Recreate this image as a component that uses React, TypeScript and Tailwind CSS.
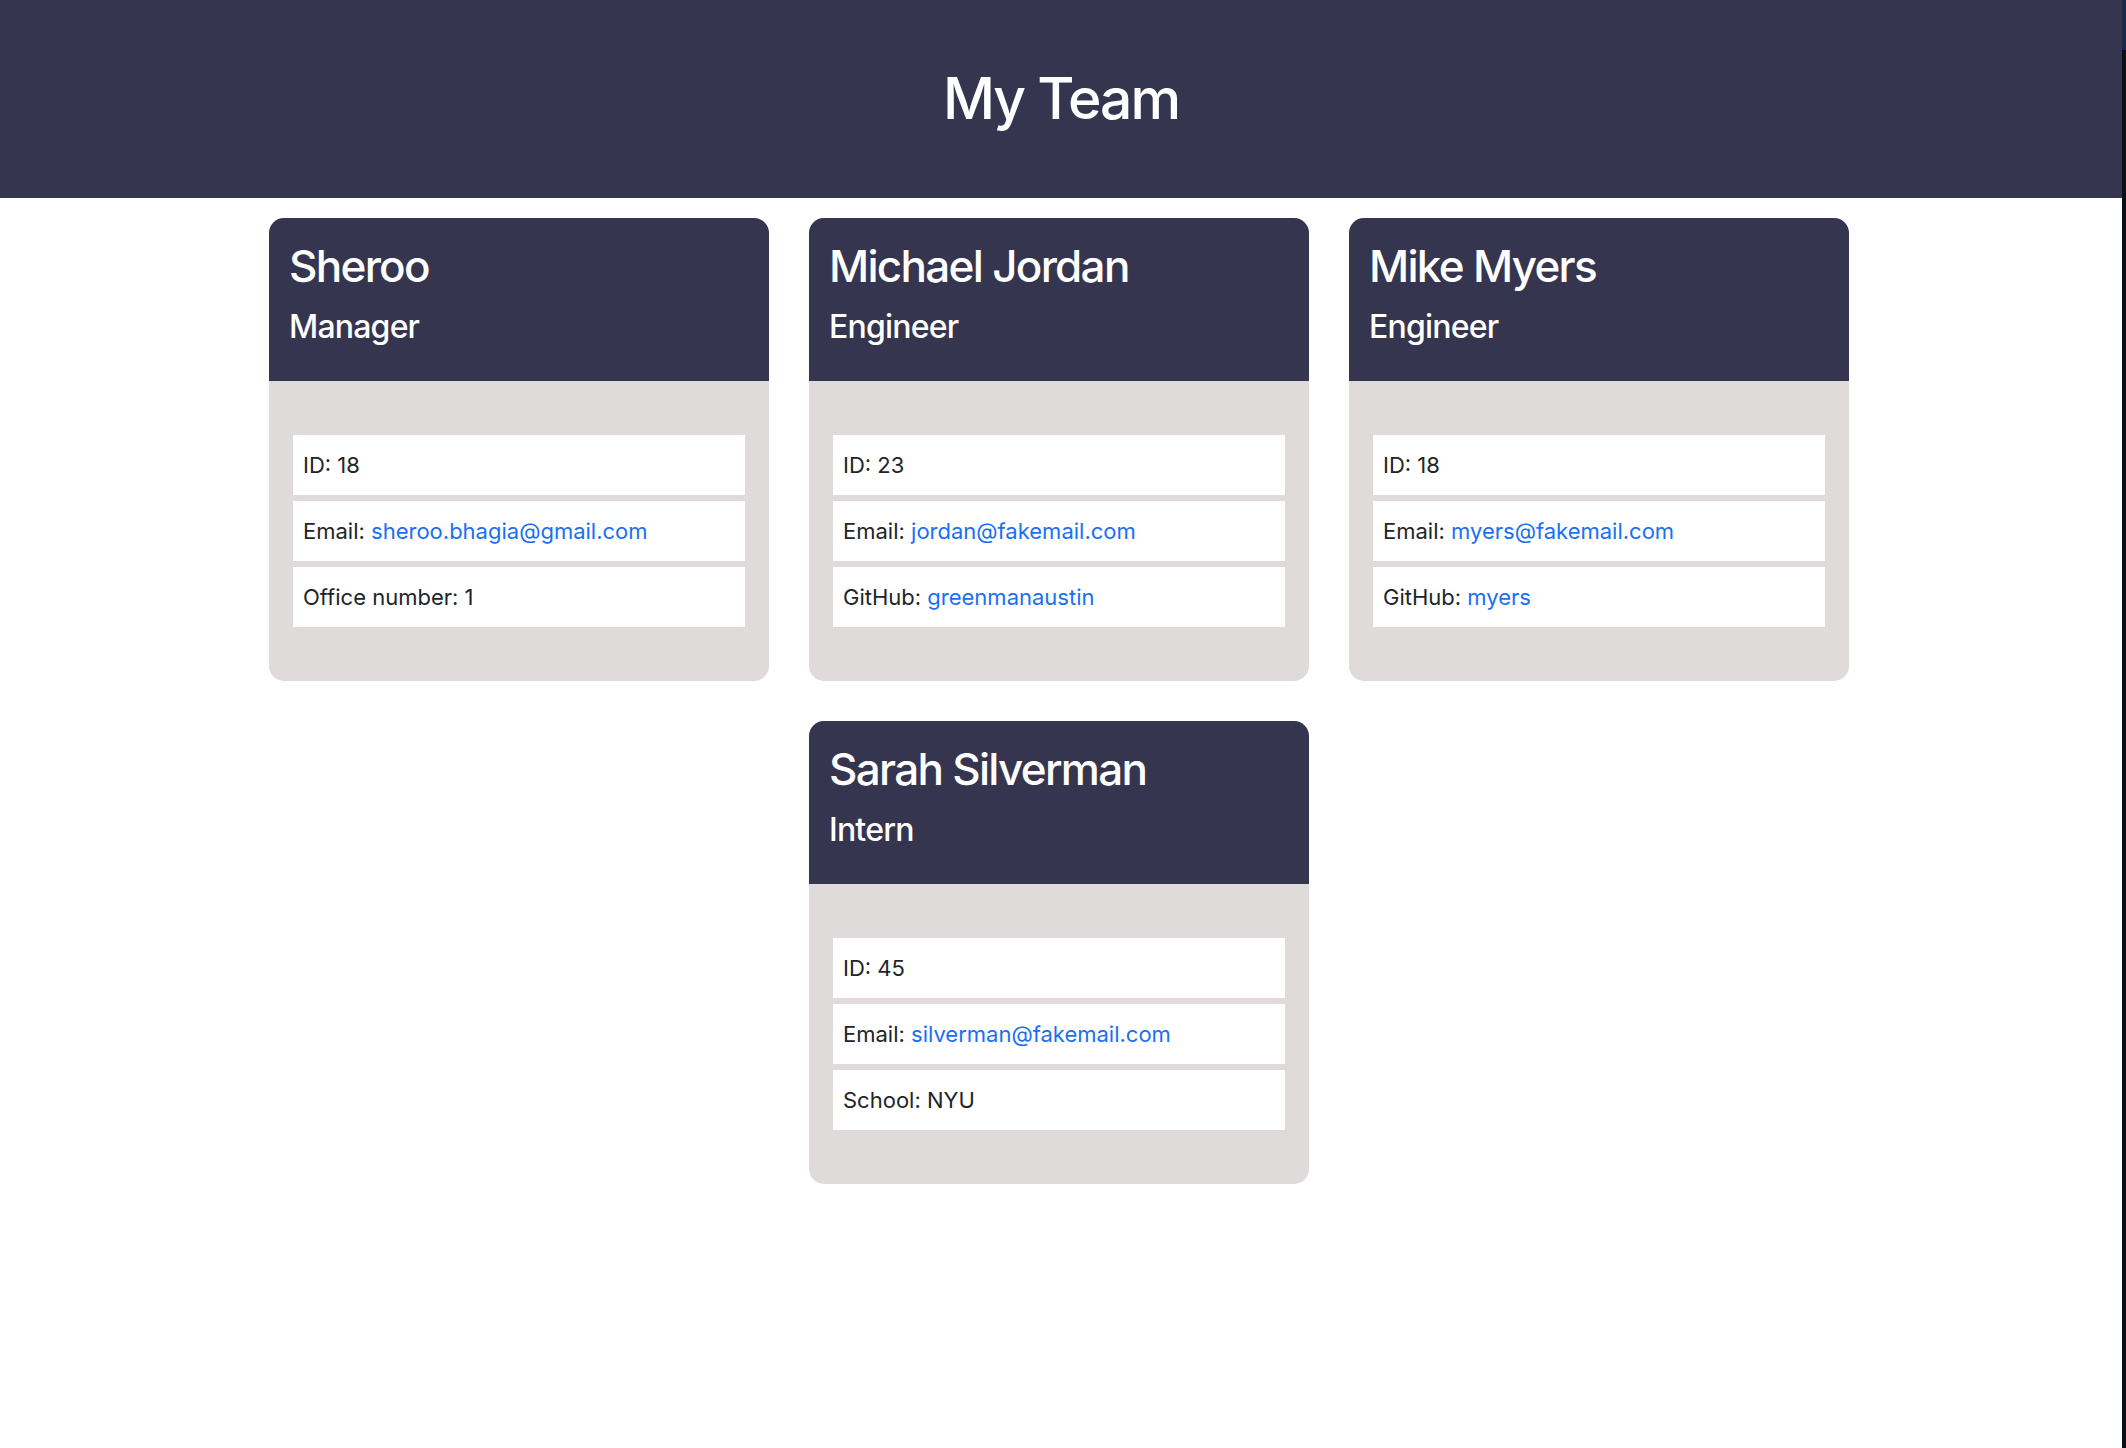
import React from "react";

type Row = { label: string; value: string; link?: boolean };
type Member = { name: string; role: string; rows: Row[] };

const team: Member[] = [
  {
    name: "Sheroo",
    role: "Manager",
    rows: [
      { label: "ID", value: "18" },
      { label: "Email", value: "sheroo.bhagia@gmail.com", link: true },
      { label: "Office number", value: "1" },
    ],
  },
  {
    name: "Michael Jordan",
    role: "Engineer",
    rows: [
      { label: "ID", value: "23" },
      { label: "Email", value: "jordan@fakemail.com", link: true },
      { label: "GitHub", value: "greenmanaustin", link: true },
    ],
  },
  {
    name: "Mike Myers",
    role: "Engineer",
    rows: [
      { label: "ID", value: "18" },
      { label: "Email", value: "myers@fakemail.com", link: true },
      { label: "GitHub", value: "myers", link: true },
    ],
  },
  {
    name: "Sarah Silverman",
    role: "Intern",
    rows: [
      { label: "ID", value: "45" },
      { label: "Email", value: "silverman@fakemail.com", link: true },
      { label: "School", value: "NYU" },
    ],
  },
];

function Card({ m }: { m: Member }) {
  return (
    <div className="w-[500px] rounded-[15px] overflow-hidden bg-[#dfdbdb]">
      <div className="h-[163px] bg-[#36354f] text-white px-[20px] pt-[21px]">
        <div className="text-[44px] leading-[54px] font-medium tracking-[-1.7px]">{m.name}</div>
        <div className="text-[32px] leading-[38px] font-medium mt-[15px] tracking-[-0.8px]">{m.role}</div>
      </div>
      <div className="px-[24px] py-[54px] flex flex-col gap-[6px]">
        {m.rows.map((r) => (
          <div
            key={r.label}
            className="h-[60px] bg-white flex items-center px-[10px] text-[22px] text-[#212529]"
          >
            <span>
              {r.label}:{" "}
              {r.link ? (
                <a href="#" className="text-[#1a6ff5]">
                  {r.value}
                </a>
              ) : (
                r.value
              )}
            </span>
          </div>
        ))}
      </div>
    </div>
  );
}

export default function App() {
  return (
    <div
      className="flex min-h-[1448px] w-full bg-white"
      style={{ fontFamily: "Inter, 'Noto Sans', sans-serif" }}
    >
      <div className="flex-1 min-w-0">
        <header className="h-[198px] bg-[#36354f] flex items-center justify-center">
          <h1 className="text-white text-[57px] leading-[70px] font-medium tracking-[-2px]">My Team</h1>
        </header>
        <main className="pt-[20px] ml-[269px] w-[1580px] flex flex-wrap justify-center gap-[40px]">
          {team.map((m) => (
            <Card key={m.name} m={m} />
          ))}
        </main>
      </div>
      <div className="w-[4px] flex flex-col">
        <div className="h-[50px] bg-[#1c2a4a]" />
        <div className="flex-1 bg-[#0b0f16]" />
      </div>
    </div>
  );
}
